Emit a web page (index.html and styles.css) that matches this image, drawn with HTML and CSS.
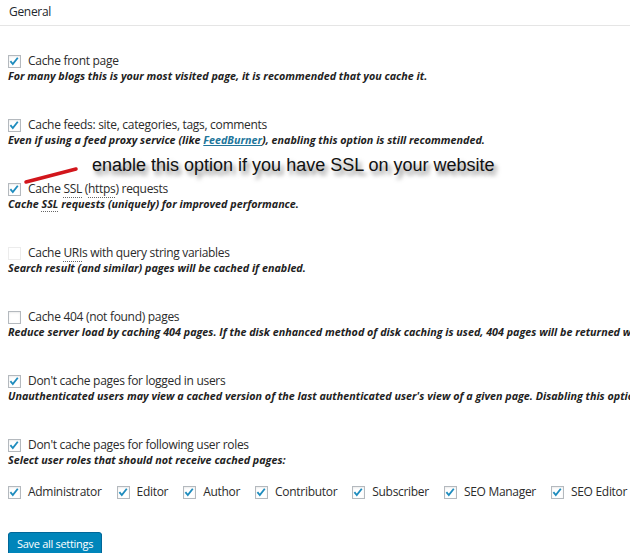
FILE: index.html
```html
<!DOCTYPE html>
<html>
<head>
<meta charset="utf-8">
<link rel="stylesheet" href="styles.css">
</head>
<body>
<div class="page">
  <div class="header">General</div>
  <div class="options">
    <div class="opt">
      <div class="row"><span class="cb"><svg viewBox="0 0 13 13"><path d="M2.6 6.2 L5.2 9.2 L10.6 2.4"/></svg></span><span class="label">Cache front page</span></div>
      <p class="desc">For many blogs this is your most visited page, it is recommended that you cache it.</p>
    </div>
    <div class="opt">
      <div class="row"><span class="cb"><svg viewBox="0 0 13 13"><path d="M2.6 6.2 L5.2 9.2 L10.6 2.4"/></svg></span><span class="label">Cache feeds: site, categories, tags, comments</span></div>
      <p class="desc">Even if using a feed proxy service (like <a class="link">FeedBurner</a>), enabling this option is still recommended.</p>
    </div>
    <div class="opt">
      <div class="row"><span class="cb"><svg viewBox="0 0 13 13"><path d="M2.6 6.2 L5.2 9.2 L10.6 2.4"/></svg></span><span class="label">Cache <abbr class="ab">SSL</abbr> (<abbr class="ab">https</abbr>) requests</span></div>
      <p class="desc">Cache <abbr class="ab">SSL</abbr> requests (uniquely) for improved performance.</p>
    </div>
    <div class="opt">
      <div class="row"><span class="cb disabled"></span><span class="label">Cache <abbr class="ab">URI</abbr>s with query string variables</span></div>
      <p class="desc">Search result (and similar) pages will be cached if enabled.</p>
    </div>
    <div class="opt">
      <div class="row"><span class="cb"></span><span class="label">Cache 404 (not found) pages</span></div>
      <p class="desc">Reduce server load by caching 404 pages. If the disk enhanced method of disk caching is used, 404 pages will be returned with a 200 response code. Use at your own risk.</p>
    </div>
    <div class="opt">
      <div class="row"><span class="cb"><svg viewBox="0 0 13 13"><path d="M2.6 6.2 L5.2 9.2 L10.6 2.4"/></svg></span><span class="label">Don't cache pages for logged in users</span></div>
      <p class="desc">Unauthenticated users may view a cached version of the last authenticated user's view of a given page. Disabling this option is not recommended.</p>
    </div>
    <div class="opt last">
      <div class="row"><span class="cb"><svg viewBox="0 0 13 13"><path d="M2.6 6.2 L5.2 9.2 L10.6 2.4"/></svg></span><span class="label">Don't cache pages for following user roles</span></div>
      <p class="desc">Select user roles that should not receive cached pages:</p>
      <div class="roles">
        <div class="role"><span class="cb"><svg viewBox="0 0 13 13"><path d="M2.6 6.2 L5.2 9.2 L10.6 2.4"/></svg></span><span class="label">Administrator</span></div>
        <div class="role"><span class="cb"><svg viewBox="0 0 13 13"><path d="M2.6 6.2 L5.2 9.2 L10.6 2.4"/></svg></span><span class="label">Editor</span></div>
        <div class="role"><span class="cb"><svg viewBox="0 0 13 13"><path d="M2.6 6.2 L5.2 9.2 L10.6 2.4"/></svg></span><span class="label">Author</span></div>
        <div class="role"><span class="cb"><svg viewBox="0 0 13 13"><path d="M2.6 6.2 L5.2 9.2 L10.6 2.4"/></svg></span><span class="label">Contributor</span></div>
        <div class="role"><span class="cb"><svg viewBox="0 0 13 13"><path d="M2.6 6.2 L5.2 9.2 L10.6 2.4"/></svg></span><span class="label">Subscriber</span></div>
        <div class="role"><span class="cb"><svg viewBox="0 0 13 13"><path d="M2.6 6.2 L5.2 9.2 L10.6 2.4"/></svg></span><span class="label">SEO Manager</span></div>
        <div class="role"><span class="cb"><svg viewBox="0 0 13 13"><path d="M2.6 6.2 L5.2 9.2 L10.6 2.4"/></svg></span><span class="label">SEO Editor</span></div>
      </div>
    </div>
    <button class="save">Save all settings</button>
  </div>
  <div class="annotation">enable this option if you have SSL on your website</div>
  <svg class="pointer" width="60" height="20" viewBox="0 0 60 20"><path d="M3 17 L53 4"/></svg>
</div>
</body>
</html>
```

FILE: styles.css
```css
html, body {
  margin: 0;
  padding: 0;
  background: #fff;
  overflow: hidden;
}
.page {
  position: relative;
  width: 630px;
  height: 553px;
  overflow: hidden;
  font-family: "Open Sans", "Noto Sans", sans-serif;
  color: #32373c;
}
.header {
  height: 26px;
  box-sizing: border-box;
  padding: 3px 9px 0;
  line-height: 18px;
  font-size: 12px;
  letter-spacing: -0.3px;
  color: #23282d;
  border-bottom: 1px solid #e5e5e5;
}
.options {
  padding: 27px 0 0 8px;
}
.opt {
  margin-bottom: 33px;
}
.opt.last {
  margin-bottom: 0;
}
.row, .role {
  display: flex;
  align-items: center;
  height: 16px;
  white-space: nowrap;
}
.label {
  font-size: 12px;
  letter-spacing: -0.3px;
  line-height: 16px;
  color: #2b2b2b;
  margin-left: 7px;
}
.cb {
  flex: none;
  width: 13px;
  height: 13px;
  box-sizing: border-box;
  border: 1px solid #b4b9be;
  background: #fff;
  box-shadow: inset 0 1px 2px rgba(0,0,0,0.08);
  display: flex;
}
.cb svg {
  width: 13px;
  height: 13px;
  margin: -1px 0 0 -1px;
  fill: none;
  stroke: #1e8cbe;
  stroke-width: 2;
}
.cb.disabled {
  border-color: #ececec;
  box-shadow: none;
}
.desc {
  margin: 0;
  font-size: 10.75px;
  line-height: 15px;
  font-style: italic;
  font-weight: 700;
  color: #222;
  white-space: nowrap;
}
.link {
  color: #21759b;
  text-decoration: underline;
}
.ab {
  text-decoration: none;
  border-bottom: 1px dotted #666;
}
.roles {
  display: flex;
  margin-top: 16px;
}
.role {
  margin-right: 15px;
}
.save {
  display: block;
  margin-top: 32px;
  height: 24px;
  padding: 0 8px;
  background: #0085ba;
  border: 1px solid #006799;
  border-radius: 3px;
  color: #fff;
  font-family: "Open Sans", "Noto Sans", sans-serif;
  font-size: 11px;
  letter-spacing: -0.3px;
  line-height: 22px;
  box-shadow: 0 1px 0 #006799;
}
.annotation {
  position: absolute;
  left: 92px;
  top: 155px;
  font-family: "Liberation Sans", Arial, sans-serif;
  font-size: 18px;
  line-height: 20px;
  color: #111;
  text-shadow: 3px 4px 4px rgba(0,0,0,0.5);
  white-space: nowrap;
}
.pointer {
  position: absolute;
  left: 23px;
  top: 165px;
}
.pointer path {
  stroke: #d2161c;
  stroke-width: 3.5;
  stroke-linecap: round;
  fill: none;
}
```
